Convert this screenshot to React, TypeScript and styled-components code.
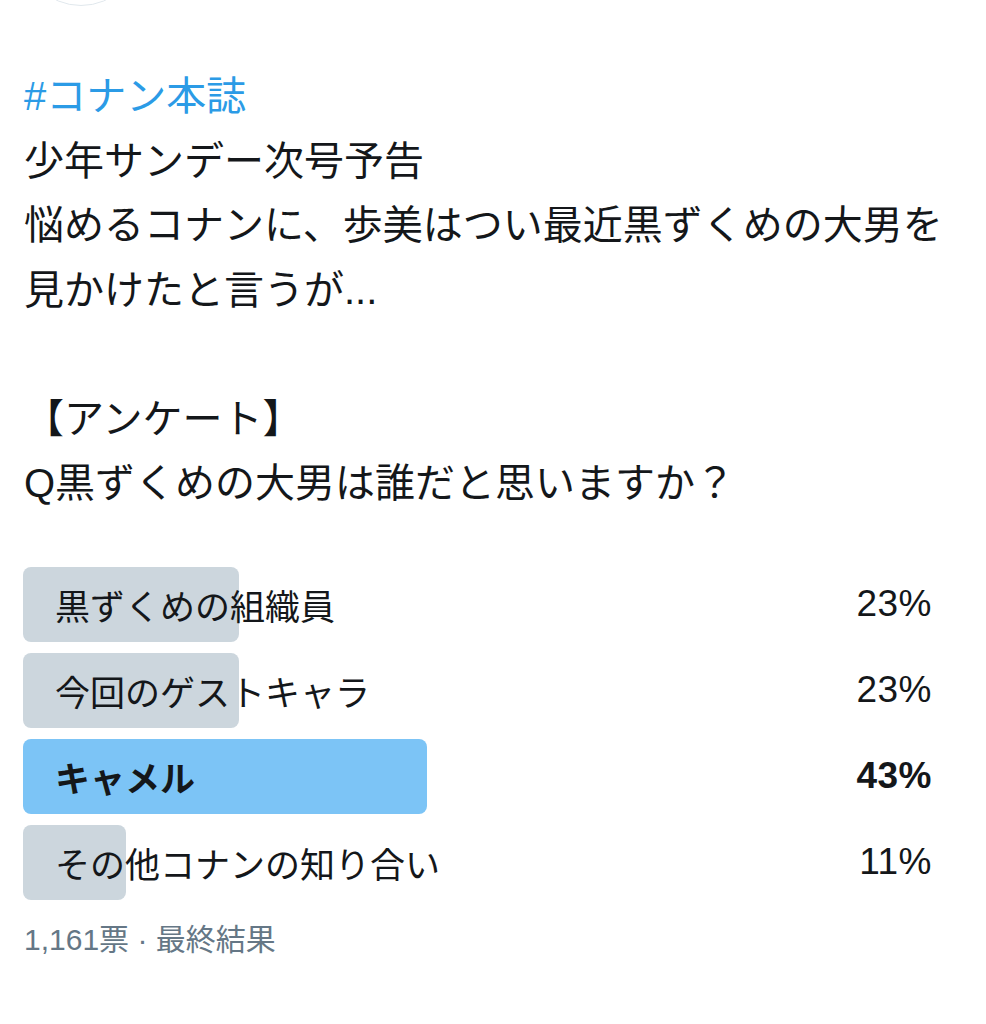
import React from "react";
import styled, { createGlobalStyle } from "styled-components";

const GlobalStyle = createGlobalStyle`
  html, body {
    margin: 0;
    padding: 0;
    background: #ffffff;
  }
  body {
    font-family: "Liberation Sans", "Noto Sans CJK JP", sans-serif;
    color: #14171a;
    overflow: hidden;
  }
`;

const Page = styled.div`
  width: 986px;
  height: 1024px;
  overflow: hidden;
  display: flex;
  flex-direction: column;
`;

const Avatar = styled.div`
  width: 118px;
  height: 118px;
  margin-top: -114px;
  margin-left: 21px;
  border-radius: 50%;
  border: 1px solid #e1e8ed;
  background: #ffffff;
  flex-shrink: 0;
`;

const Body = styled.div`
  margin-top: 58px;
  padding: 0 24px;
  font-size: 40px;
  line-height: 64.5px;
  color: #14171a;
`;

const Line = styled.div`
  white-space: nowrap;
  min-height: 64.5px;
`;

const Hashtag = styled.span`
  color: #2b9be6;
`;

const Poll = styled.div`
  margin-top: 51px;
  padding: 0 24px 0 23px;
  display: flex;
  flex-direction: column;
  gap: 11px;
`;

const Choice = styled.div`
  position: relative;
  height: 75px;
  display: flex;
  align-items: center;
  justify-content: space-between;
  padding: 0 30px 0 32px;
  font-size: 35px;
`;

const Fill = styled.div<{ $winner: boolean }>`
  position: absolute;
  left: 0;
  top: 0;
  bottom: 0;
  border-radius: 8px;
  background: ${(p) => (p.$winner ? "#7cc4f6" : "#ccd6dd")};
`;

const Label = styled.span<{ $winner: boolean }>`
  position: relative;
  font-weight: ${(p) => (p.$winner ? 700 : 400)};
  white-space: nowrap;
`;

const Percent = styled.span<{ $winner: boolean }>`
  position: relative;
  font-size: 37px;
  font-weight: ${(p) => (p.$winner ? 700 : 400)};
  letter-spacing: 0.5px;
`;

const Footer = styled.div`
  margin-top: 20px;
  padding-left: 24px;
  font-size: 30px;
  line-height: 40px;
  color: #657786;
`;

const choices = [
  { label: "黒ずくめの組織員", pct: 23 },
  { label: "今回のゲストキャラ", pct: 23 },
  { label: "キャメル", pct: 43, winner: true },
  { label: "その他コナンの知り合い", pct: 11 },
];

const App = () => {
  return (
    <Page>
      <GlobalStyle />
      <Avatar />
      <Body>
        <Line>
          <Hashtag>#コナン本誌</Hashtag>
        </Line>
        <Line>少年サンデー次号予告</Line>
        <Line>悩めるコナンに、歩美はつい最近黒ずくめの大男を</Line>
        <Line>見かけたと言うが...</Line>
        <Line />
        <Line>【アンケート】</Line>
        <Line>Q黒ずくめの大男は誰だと思いますか？</Line>
      </Body>
      <Poll>
        {choices.map((c) => (
          <Choice key={c.label}>
            <Fill $winner={!!c.winner} style={{ width: `${c.pct}%` }} />
            <Label $winner={!!c.winner}>{c.label}</Label>
            <Percent $winner={!!c.winner}>{c.pct}%</Percent>
          </Choice>
        ))}
      </Poll>
      <Footer>1,161票 · 最終結果</Footer>
    </Page>
  );
};

export default App;
